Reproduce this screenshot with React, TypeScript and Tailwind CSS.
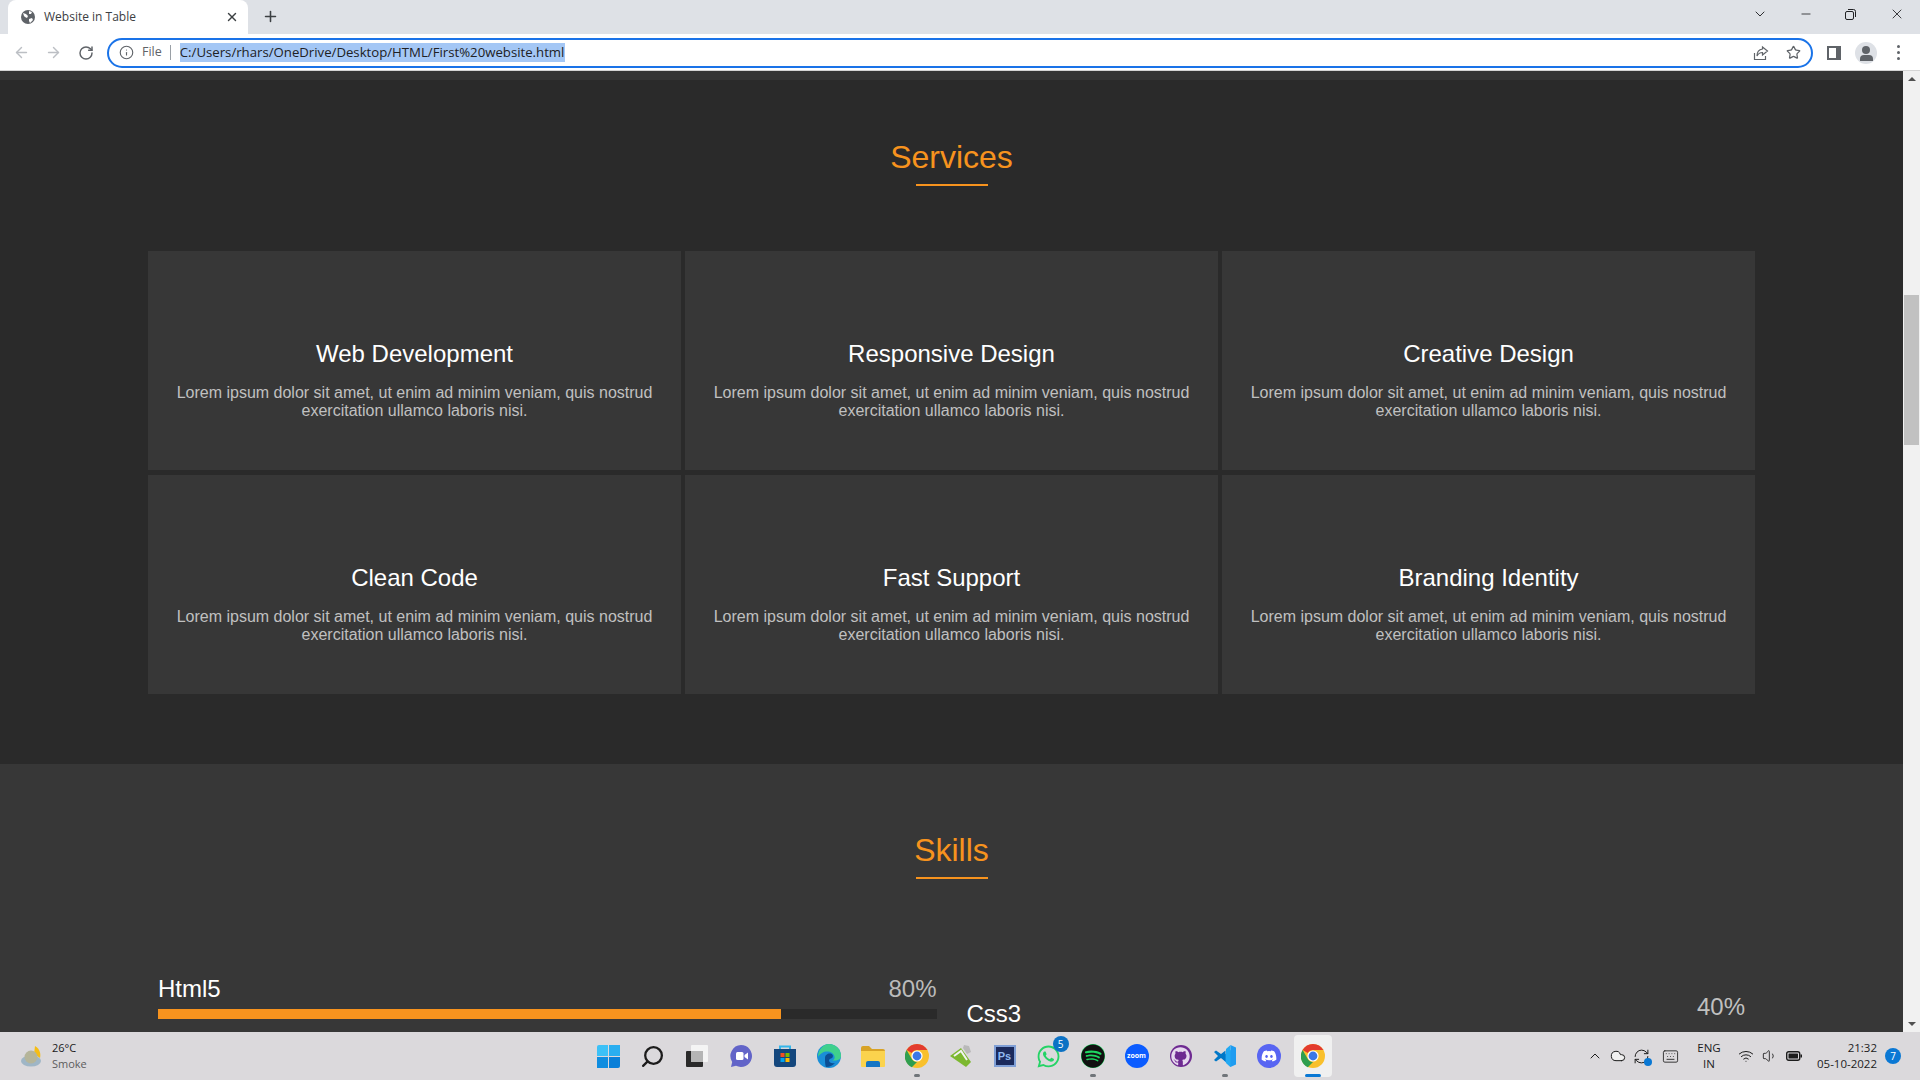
import { ArrowLeft, ArrowRight, RotateCw, Info, Star, X, Plus, ChevronDown, ChevronUp, Minus, Search, Wifi, Volume1, Keyboard, Cloud, RefreshCw } from 'lucide-react';
import { FaDiscord, FaGithub, FaSpotify, FaWhatsapp } from 'react-icons/fa';

const services = [
  'Web Development',
  'Responsive Design',
  'Creative Design',
  'Clean Code',
  'Fast Support',
  'Branding Identity',
];

const ChromeIcon = () => (
  <svg width="24" height="24" viewBox="0 0 24 24">
    <circle cx="12" cy="12" r="12" fill="#f9c02c" />
    <path d="M12 0a12 12 0 0 1 10.4 6H12a6 6 0 0 0-5.2 3L1.6 6A12 12 0 0 1 12 0z" fill="#e33b2e" />
    <path d="M1.6 6l5.2 9a6 6 0 0 0 5.2 3l-5.2 5.2A12 12 0 0 1 1.6 6z" fill="#2f9e4f" />
    <circle cx="12" cy="12" r="5.6" fill="#fff" />
    <circle cx="12" cy="12" r="4.4" fill="#3b78e7" />
  </svg>
);

const WindowsIcon = () => (
  <div className="grid grid-cols-2 gap-[1px] w-[23px] h-[23px]">
    <div className="bg-[#3cc1f7] rounded-tl-[2px]" />
    <div className="bg-[#29aef0]" />
    <div className="bg-[#0f8de0]" />
    <div className="bg-[#0a7fd8] rounded-br-[2px]" />
  </div>
);

const TaskViewIcon = () => (
  <svg width="24" height="24" viewBox="0 0 24 24">
    <rect x="6" y="1" width="17" height="17" rx="1" fill="#f4f4f4" />
    <rect x="1" y="7" width="17" height="16" rx="1" fill="#2a2a2a" />
    <rect x="6" y="7" width="12" height="11" fill="#b5b5b5" />
  </svg>
);

const MeetIcon = () => (
  <svg width="24" height="24" viewBox="0 0 24 24">
    <path d="M12 1a11 11 0 1 1-5 20.8L2 23l1.2-5A11 11 0 0 1 12 1z" fill="#6264c8" />
    <rect x="7" y="8" width="7.5" height="8" rx="1.5" fill="#fff" />
    <path d="M15.5 11l3.5-2.5v7L15.5 13z" fill="#fff" />
  </svg>
);

const StoreIcon = () => (
  <svg width="24" height="24" viewBox="0 0 24 24">
    <path d="M7 5V2.5h10V5" fill="none" stroke="#35b6ea" strokeWidth="2" />
    <path d="M1 5h22v15a3 3 0 0 1-3 3H4a3 3 0 0 1-3-3z" fill="#14477d" />
    <rect x="7.5" y="9" width="4" height="4" fill="#f25022" />
    <rect x="12.5" y="9" width="4" height="4" fill="#7fba00" />
    <rect x="7.5" y="14" width="4" height="4" fill="#00a4ef" />
    <rect x="12.5" y="14" width="4" height="4" fill="#ffb900" />
  </svg>
);

const EdgeIcon = () => (
  <svg width="24" height="24" viewBox="0 0 24 24">
    <circle cx="12" cy="12" r="12" fill="#1a8fd8" />
    <path d="M12 0a12 12 0 0 1 12 12c0 3-3 4.5-6 4.5h-4c3 0 4-2 3.5-4C16.5 8 10 6 5 9c-2 1.2-3.5 3-4 4C1 6 6 0 12 0z" fill="#3fd08c" />
    <path d="M8 14c0-3 2.500-4.500 4.500-4.500 3 0 4 2 3 4-1 1.500-3.500 1-3.500 3 0 2 3 3.500 6 2.500A12 12 0 0 1 9 23c-1-2-1-6-1-9z" fill="#0c4f94" />
  </svg>
);

const FolderIcon = () => (
  <svg width="24" height="24" viewBox="0 0 24 24">
    <path d="M0 4a2 2 0 0 1 2-2h6l3 3h11a2 2 0 0 1 2 2v2H0z" fill="#d8a326" />
    <path d="M0 7h24v15a1 1 0 0 1-1 1H1a1 1 0 0 1-1-1z" fill="#fbd34d" />
    <path d="M5 23v-4a2 2 0 0 1 2-2h10a2 2 0 0 1 2 2v4z" fill="#1575c4" />
  </svg>
);

const InkIcon = () => (
  <svg width="24" height="24" viewBox="0 0 24 24">
    <path d="M1 12L12 4l10 14-5 5z" fill="#7cb82f" />
    <path d="M5 12l7-5 6 9" fill="none" stroke="#f2f2f2" strokeWidth="2" />
    <path d="M15 1l5 1 2 6-4 2-4-6z" fill="#b9b9b9" />
  </svg>
);

const VsCodeIcon = () => (
  <svg width="24" height="24" viewBox="0 0 24 24">
    <path d="M17.500 1L23 3.500v17L17.500 23 8 13.500l9.500-7.500z" fill="#1f9cf0" />
    <path d="M17.500 1L17.500 23 13 19V5z" fill="#23a9f2" />
    <path d="M3 6.500L1 8l4 4-4 4 2 1.500 5-3.500 4.500 3.500V6.500L8 10z" fill="#0078c8" />
  </svg>
);

const TaskIcon = ({ children, active, running }: { children: React.ReactNode; active?: boolean; running?: boolean }) => (
  <div className={`relative w-[38px] h-[42px] mx-[3px] flex items-center justify-center rounded ${active ? 'bg-[#f0f0f0]' : ''}`}>
    {children}
    {running && <span className="absolute bottom-0 w-[6px] h-[3px] rounded-full bg-[#70757a]" />}
    {active && <span className="absolute bottom-0 w-4 h-[3px] rounded-full bg-[#0a78d4]" />}
  </div>
);

const Taskbar = () => (
  <div className="h-[48px] shrink-0 bg-[#dbd9dc] grid grid-cols-[1fr_auto_1fr] items-center font-['Open_Sans',sans-serif]">
    <div className="flex items-center pl-[20px] gap-[8px]">
      <svg width="24" height="24" viewBox="0 0 24 24">
        <path d="M15 2c5 3 6 8 5 12l-6-4z" fill="#f5bd14" />
        <ellipse cx="11" cy="17" rx="10" ry="5.500" fill="#9fb6c6" />
        <circle cx="11" cy="13" r="6.500" fill="#b5b59a" />
      </svg>
      <div className="flex flex-col text-[11px] leading-[16px] mt-[-1px]">
        <span className="text-[#1a1a1a]">26°C</span>
        <span className="text-[#5c5c5c]">Smoke</span>
      </div>
    </div>

    <div className="flex items-center ml-[1px]">
      <TaskIcon><WindowsIcon /></TaskIcon>
      <TaskIcon><Search className="w-[25px] h-[25px] text-[#1c1c1c] -scale-x-100" strokeWidth={2.2} /></TaskIcon>
      <TaskIcon><TaskViewIcon /></TaskIcon>
      <TaskIcon><MeetIcon /></TaskIcon>
      <TaskIcon><StoreIcon /></TaskIcon>
      <TaskIcon><EdgeIcon /></TaskIcon>
      <TaskIcon><FolderIcon /></TaskIcon>
      <TaskIcon running><ChromeIcon /></TaskIcon>
      <TaskIcon><InkIcon /></TaskIcon>
      <TaskIcon>
        <div className="w-[22px] h-[22px] bg-[#1b2a5c] border-2 border-[#7f9fd6] flex items-center justify-center text-[11px] font-bold text-[#8fb8f0] font-['Liberation_Sans',sans-serif]">Ps</div>
      </TaskIcon>
      <TaskIcon>
        <FaWhatsapp className="w-[25px] h-[25px] text-[#25d366]" />
        <span className="absolute top-[1px] right-[-1px] w-[16px] h-[16px] rounded-full bg-[#0c72c4] text-white text-[10px] leading-[16px] text-center">5</span>
      </TaskIcon>
      <TaskIcon running>
        <div className="w-[24px] h-[24px] rounded-full bg-[#1ed760] flex items-center justify-center">
          <FaSpotify className="w-[24px] h-[24px] text-[#111]" />
        </div>
      </TaskIcon>
      <TaskIcon>
        <div className="w-[24px] h-[24px] rounded-full bg-[#0b5cff] text-white text-[7px] font-bold flex items-center justify-center">zoom</div>
      </TaskIcon>
      <TaskIcon>
        <div className="w-[22px] h-[22px] rounded-full bg-[#6e2a91] flex items-center justify-center">
          <FaGithub className="w-[19px] h-[19px] text-[#e6d8ee]" />
        </div>
      </TaskIcon>
      <TaskIcon running><VsCodeIcon /></TaskIcon>
      <TaskIcon>
        <div className="w-[24px] h-[24px] rounded-full bg-[#5865f2] flex items-center justify-center">
          <FaDiscord className="w-[16px] h-[16px] text-white" />
        </div>
      </TaskIcon>
      <TaskIcon active running={false}><ChromeIcon /></TaskIcon>
    </div>

    <div className="flex items-center justify-end text-[#1c1c1c] text-[12px] pr-[19px]">
      <ChevronUp className="w-[16px] h-[16px]" strokeWidth={1.5} />
      <Cloud className="w-[16px] h-[16px] ml-[7px] fill-[#f0f0f0]" strokeWidth={1.5} />
      <div className="relative ml-[7px]">
        <RefreshCw className="w-[17px] h-[17px]" strokeWidth={1.4} />
        <span className="absolute right-[-2px] bottom-[-1px] w-[8px] h-[8px] rounded-full bg-[#0a78d4]" />
      </div>
      <Keyboard className="w-[17px] h-[17px] ml-[12px]" strokeWidth={1.2} />
      <div className="flex flex-col items-center leading-[16px] text-[11.5px] ml-[18px] w-[24px]">
        <span>ENG</span>
        <span>IN</span>
      </div>
      <Wifi className="w-[16px] h-[16px] ml-[17px]" strokeWidth={1.5} />
      <Volume1 className="w-[16px] h-[16px] ml-[8px]" strokeWidth={1.3} />
      <svg width="16" height="10" viewBox="0 0 16 10" className="ml-[8px]">
        <rect x="0.700" y="0.700" width="13" height="8.600" rx="2" fill="none" stroke="#1c1c1c" strokeWidth="1.400" />
        <rect x="2.500" y="2.500" width="9.500" height="5" rx="0.500" fill="#1c1c1c" />
        <rect x="14.500" y="3.500" width="1.500" height="3" fill="#1c1c1c" />
      </svg>
      <div className="flex flex-col items-end leading-[16px] text-[11.5px] ml-[15px]">
        <span>21:32</span>
        <span>05-10-2022</span>
      </div>
      <span className="ml-[8px] w-[16px] h-[16px] rounded-full bg-[#0a78d4] text-white text-[10px] leading-[16px] text-center">7</span>
    </div>
  </div>
);

const BrowserChrome = () => (
  <div className="shrink-0 font-['Open_Sans',sans-serif]">
    <div className="h-[34px] bg-[#dee1e6] flex items-end pl-[8px]">
      <div className="w-[240px] h-[34px] bg-white rounded-t-[8px] flex items-center pl-[12px] pr-[9px]">
        <svg width="16" height="16" viewBox="0 0 16 16" className="shrink-0">
          <circle cx="8" cy="8" r="7" fill="#5f6368" />
          <path d="M3 4l3 1 2 2-1 2-2-1-1-1zM9 2l3 1-1 2-2 0zM9 10l3-1 1 2-3 3-1-2z" fill="#fff" />
        </svg>
        <span className="ml-[8px] text-[12px] text-[#3c4043] flex-1">Website in Table</span>
        <X className="w-[14px] h-[14px] text-[#3c4043]" strokeWidth={2.4} />
      </div>
      <Plus className="w-[17px] h-[17px] ml-[14px] mb-[9px] text-[#3c4043]" strokeWidth={2.2} />
      <div className="flex-1" />
      <div className="flex items-center self-start h-[28px] text-[#202124]">
        <ChevronDown className="w-[16px] h-[16px] mr-[31px]" strokeWidth={1.4} />
        <Minus className="w-[14px] h-[14px] mr-[32px]" strokeWidth={1.4} />
        <svg width="11" height="11" viewBox="0 0 11 11" fill="none" stroke="currentColor" className="mr-[33px]">
          <rect x="0.500" y="2.500" width="8" height="8" rx="1.500" />
          <path d="M3 0.500h5.500a2 2 0 0 1 2 2V8" />
        </svg>
        <X className="w-[16px] h-[16px] mr-[15px]" strokeWidth={1.3} />
      </div>
    </div>
    <div className="h-[37px] pt-px bg-white flex items-center border-b border-[#d5d5d5]">
      <ArrowLeft className="w-[17px] h-[17px] ml-[13px] text-[#bcbfc4]" strokeWidth={2} />
      <ArrowRight className="w-[17px] h-[17px] ml-[15px] text-[#bcbfc4]" strokeWidth={2} />
      <RotateCw className="w-[16px] h-[16px] ml-[16px] text-[#5f6368]" strokeWidth={2.2} />
      <div className="ml-[13px] w-[1706px] h-[30px] border-2 border-[#1a73e8] rounded-full flex items-center pl-[10px] pr-[10px]">
        <Info className="w-[15px] h-[15px] text-[#5f6368]" strokeWidth={1.8} />
        <span className="ml-[8px] text-[12.500px] text-[#5f6368]">File</span>
        <span className="ml-[8px] w-px h-[15px] bg-[#9aa0a6]" />
        <span className="ml-[9px] bg-[#a4c7f5] text-[#202124] text-[13.200px] leading-[19px] w-[385px] whitespace-nowrap overflow-hidden">C:/Users/rhars/OneDrive/Desktop/HTML/First%20website.html</span>
        <div className="flex-1" />
        <svg width="16" height="16" viewBox="0 0 16 16" fill="none" stroke="#5f6368" strokeWidth="1.200">
          <path d="M1.500 8v6.500h11V11M9.500 2l5 4-5 4V7.500C7 7.500 5 9 4 11c0-4 2-6.500 5.500-7z" />
        </svg>
        <Star className="w-[15px] h-[15px] ml-[17px] text-[#5f6368]" strokeWidth={2} />
      </div>
      <svg width="14" height="14" viewBox="0 0 14 14" className="ml-[14px]">
        <rect width="14" height="14" fill="#5f6368" />
        <rect x="2" y="2" width="7" height="10" fill="#fff" />
      </svg>
      <div className="ml-[14px] w-[22px] h-[22px] rounded-full bg-[#dee1e6] overflow-hidden flex flex-col items-center justify-end">
        <span className="w-[8px] h-[8px] rounded-full bg-[#5f6368]" />
        <span className="w-[13px] h-[6px] mt-px mb-[3px] rounded-t-[4px] bg-[#5f6368]" />
      </div>
      <div className="ml-[20px] flex flex-col gap-[3px]">
        <span className="w-[3px] h-[3px] rounded-full bg-[#5f6368]" />
        <span className="w-[3px] h-[3px] rounded-full bg-[#5f6368]" />
        <span className="w-[3px] h-[3px] rounded-full bg-[#5f6368]" />
      </div>
    </div>
  </div>
);

const SectionTitle = ({ title, width }: { title: string; width: string }) => (
  <div className="flex flex-col items-center">
    <h2 className="text-[32px] leading-[37px] text-[#f7931e]">{title}</h2>
    <span className={`${width} h-[2px] mt-[8px] bg-[#f7931e]`} />
  </div>
);

const SkillBar = ({ name, value }: { name: string; value: number }) => (
  <div className="flex flex-col">
    <div className="flex justify-between items-end text-[24px] leading-[28px]">
      <span className="text-white">{name}</span>
      <span className="text-[#bbbbbb]">{value}%</span>
    </div>
    <div className="mt-[6px] h-[10px] bg-[#2a2a2a]">
      <div className="h-full bg-[#f7931e]" style={{ width: `${value}%` }} />
    </div>
  </div>
);

const Scrollbar = () => (
  <div className="w-[17px] shrink-0 bg-[#f1f1f1] flex flex-col items-center relative">
    <span className="mt-[6px] w-0 h-0 border-x-[4px] border-x-transparent border-b-[4px] border-b-[#505050]" />
    <div className="mt-[214px] w-[15px] h-[150px] bg-[#c1c1c1]" />
    <div className="flex-1" />
    <span className="mb-[6px] w-0 h-0 border-x-[4px] border-x-transparent border-t-[4px] border-t-[#505050]" />
  </div>
);

export default function App() {
  return (
    <div className="w-[1920px] h-[1080px] overflow-hidden flex flex-col font-['Liberation_Sans',Arial,sans-serif]">
      <BrowserChrome />
      <div className="flex-1 min-h-0 flex">
        <div className="flex-1 min-w-0 overflow-hidden bg-[#373737]">
          <div className="h-[9px] bg-[#353535]" />
          <section className="h-[684px] bg-[#2a2a2a] pt-[59px]">
            <SectionTitle title="Services" width="w-[72px]" />
            <div className="mt-[65px] mx-[148px] grid grid-cols-3 gap-x-[4px] gap-y-[5px]">
              {services.map((s) => (
                <div key={s} className="h-[219px] bg-[#373737] pt-[89px] px-[20px] text-center">
                  <h3 className="text-[24px] leading-[28px] text-white">{s}</h3>
                  <p className="mt-[16px] text-[16px] leading-[18px] text-[#c0c0c0]">
                    Lorem ipsum dolor sit amet, ut enim ad minim veniam, quis nostrud exercitation ullamco laboris nisi.
                  </p>
                </div>
              ))}
            </div>
          </section>
          <section className="pt-[68px]">
            <SectionTitle title="Skills" width="w-[72px]" />
            <div className="mt-[96px] mx-[158px] grid grid-cols-2 gap-x-[30px]">
              <SkillBar name="Html5" value={80} />
              <div className="flex justify-between items-start text-[24px] leading-[28px]">
                <span className="text-white mt-[25px]">Css3</span>
                <span className="text-[#c0c0c0] mt-[18px]">40%</span>
              </div>
            </div>
          </section>
        </div>
        <Scrollbar />
      </div>
      <Taskbar />
    </div>
  );
}
